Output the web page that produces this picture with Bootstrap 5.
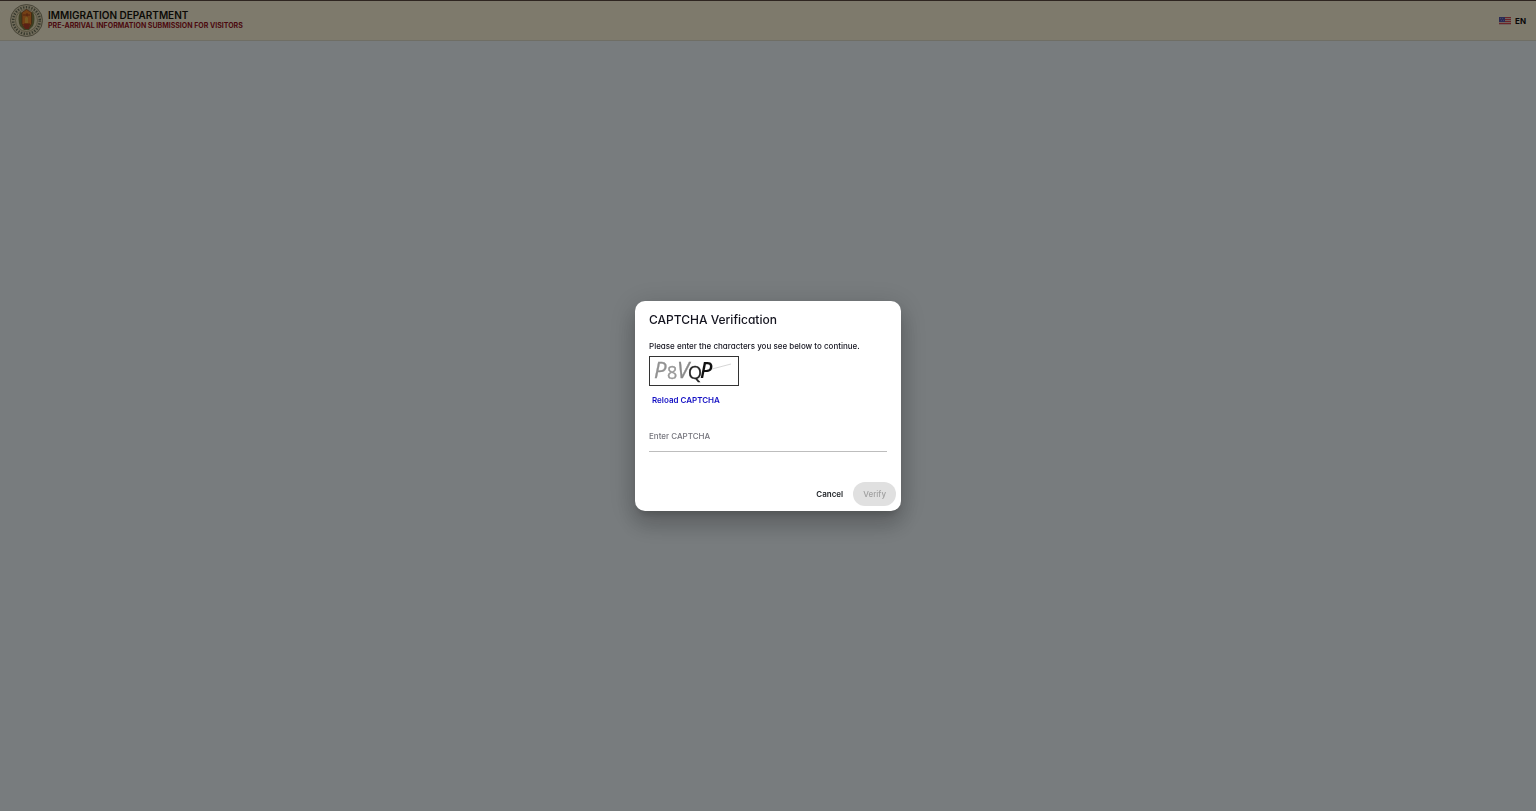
<!DOCTYPE html>
<html lang="en">
<head>
<meta charset="utf-8">
<meta name="viewport" content="width=device-width, initial-scale=1">
<title>Immigration Department</title>
<link href="https://cdn.jsdelivr.net/npm/bootstrap@5.3.0/dist/css/bootstrap.min.css" rel="stylesheet">
<style>
body { font-family: Inter, "Liberation Sans", sans-serif; font-feature-settings: "cv11"; font-size: 8px; line-height: 12px; background: #f0f8fd; color: #14141f; }
.site-bar { background: #fcf4d8; border-top: 1px solid #5c4a40; border-bottom: 1px solid #dfdccb; height: 41px; padding: 0 10px; }
.crest { width: 34px; height: 34px; }
.dept { font-size: 10px; line-height: 11px; font-weight: 600; color: #17140c; }
.subline { font-size: 7px; line-height: 10px; font-weight: 700; color: #98131d; }
.lang { font-size: 8px; line-height: 12px; font-weight: 700; color: #111; }
.modal-dialog.captcha { max-width: 266px; }
.captcha .modal-content { border: 0; border-radius: 10px; box-shadow: 0 6px 9px -4px rgba(0,0,0,.2), 0 14px 22px 2px rgba(0,0,0,.14), 0 5px 27px 5px rgba(0,0,0,.12); }
.captcha .modal-header { padding: 11px 14px 12px; border: 0; }
.captcha .modal-title { font-size: 12px; line-height: 16px; font-weight: 500; color: #14141f; }
.captcha .modal-body { padding: 0 14px; }
.prompt { font-weight: 500; }
.captcha-pic { width: 90px; height: 30px; border: 1px solid #333; margin-top: 4px; overflow: visible; }
.reload { font-size: 8px; line-height: 12px; font-weight: 600; color: #1410c4; margin: 8px 0 0 3px; }
.code-field { font-size: 8px; line-height: 14px; padding: 7px 0 8px; margin-top: 16px; border: 0; border-bottom: 1px solid #bdbdbd; border-radius: 0; background: none; color: #14141f; font-weight: 500; box-shadow: none !important; }
.code-field::placeholder { color: #74747c; opacity: 1; }
.captcha .modal-footer { padding: 30px 5px 5px; border: 0; }
.captcha .modal-footer > * { margin: 0; }
.pill { font-size: 8px; line-height: 12px; padding: 6px 10px; border: 0; border-radius: 12px; font-weight: 600; }
.pill:disabled { background: #e0e0e0; color: #a0a0a0; font-weight: 500; opacity: 1; }
</style>
</head>
<body class="vh-100">
<header class="site-bar d-flex align-items-center justify-content-between">
  <a href="#" class="d-flex align-items-center text-decoration-none">
    <svg class="crest" viewBox="0 0 34 34" aria-hidden="true">
      <circle cx="16.500" cy="16.500" r="16" fill="#e0d6b4" stroke="#77735a" stroke-width=".8"/>
      <circle cx="16.500" cy="16.500" r="13.300" fill="none" stroke="#6c7058" stroke-width="2.500" stroke-dasharray="1.3 1.5"/>
      <circle cx="16.500" cy="16.500" r="11" fill="#e8dfba" stroke="#8b8058" stroke-width=".6"/>
      <path d="M10 8q-3 7 0 14l4 4h5l4-4q3-7 0-14l-3 1h-7z" fill="#7d8047"/>
      <path d="M12 8.500l4.500-3 5 3v11q-1 4-5 5-4-1-4.500-5z" fill="#e8812b" stroke="#7b4520" stroke-width=".7"/>
      <path d="M13 11h7M17 9v5M14 20h6" stroke="#a5451e"/>
      <path d="M13 20h7l-1 5h-4z" fill="#b5432a"/>
      <path d="M15 14l2-2 1 2v5h-3z" fill="#efae3e"/>
    </svg>
    <span class="ms-1">
      <span class="dept d-block">IMMIGRATION DEPARTMENT</span>
      <span class="subline d-block">PRE-ARRIVAL INFORMATION SUBMISSION FOR VISITORS</span>
    </span>
  </a>
  <button type="button" class="lang btn p-0 border-0 d-flex align-items-center gap-1">
    <svg width="12" height="8" viewBox="0 0 12 8" aria-hidden="true">
      <path fill="#e0c4bd" d="M0 0h12v8H0z"/>
      <path fill="#d8484e" d="M0 0h12v1H0zM0 2h12v1H0zM0 4h12v1H0zM0 6h12v1H0z"/>
      <path fill="#5657a8" d="M0 0h6v5H0z"/>
      <path fill="#8587c8" d="M1 1h1v1H1zM3 1h1v1H3zM2 3h1v1H2zM4 3h1v1H4z"/>
    </svg>
    <span>EN</span>
  </button>
</header>

<div class="modal-backdrop show"></div>
<div class="modal d-block" tabindex="-1" role="dialog" aria-modal="true" aria-labelledby="captchaTitle">
  <div class="modal-dialog modal-dialog-centered captcha">
    <form class="modal-content">
      <div class="modal-header"><h1 class="modal-title" id="captchaTitle">CAPTCHA Verification</h1></div>
      <div class="modal-body">
        <label for="code" class="prompt d-block">Please enter the characters you see below to continue.</label>
        <svg class="captcha-pic d-block" viewBox="0 0 88 28" role="img" aria-label="CAPTCHA image" font-family="'Open Sans', sans-serif">
          <text x="4" y="21" font-size="22" font-style="italic" fill="#929292" stroke="#929292" stroke-width=".3">P</text>
          <text x="17" y="22" font-size="18" fill="#999" stroke="#999" stroke-width=".3">8</text>
          <text x="27" y="21" font-size="22" font-style="italic" fill="#8a8a8a" stroke="#8a8a8a" stroke-width=".3">V</text>
          <text x="38" y="22" font-size="18" fill="#222" stroke="#222" stroke-width=".3">Q</text>
          <text x="50" y="21" font-size="21" font-style="italic" font-weight="600" fill="#111">P</text>
          <path d="M62 12L81 7" fill="none" stroke="#bbb" stroke-width=".6"/>
        </svg>
        <button type="button" class="reload btn p-0 border-0 d-block">Reload CAPTCHA</button>
        <input type="text" id="code" class="code-field form-control" placeholder="Enter CAPTCHA" autocomplete="off">
      </div>
      <div class="modal-footer">
        <button type="button" class="pill btn">Cancel</button>
        <button type="submit" class="pill btn" disabled>Verify</button>
      </div>
    </form>
  </div>
</div>
<script src="https://cdn.jsdelivr.net/npm/bootstrap@5.3.0/dist/js/bootstrap.bundle.min.js"></script>
</body>
</html>
